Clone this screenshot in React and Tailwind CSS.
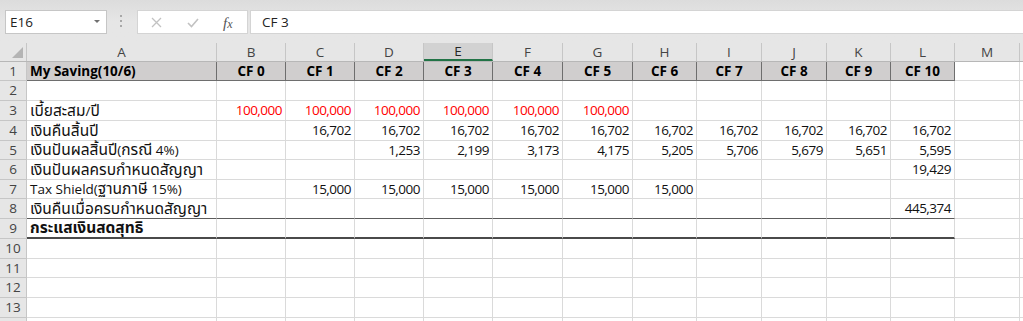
import React from 'react';

const colWidths = [190, 69, 69, 69, 69, 70, 70, 64, 65, 65, 64, 64, 65];
const letters = ['A', 'B', 'C', 'D', 'E', 'F', 'G', 'H', 'I', 'J', 'K', 'L', 'M'];
const rowHeights = [19, 20, 20, 20, 19, 20, 19, 20, 20, 20, 19, 20, 20, 20];

const cf = Array.from({ length: 11 }, (_, i) => `CF ${i}`);
const rep = (v, n) => Array(n).fill(v);

// cell values for columns B..L (index 0 = B)
const rows = [
  { label: 'My Saving(10/6)', values: cf, head: true },
  { label: '', values: [] },
  { label: 'เบี้ยสะสม/ปี', values: rep('100,000', 6), red: true },
  { label: 'เงินคืนสิ้นปี', values: ['', ...rep('16,702', 10)] },
  { label: 'เงินปันผลสิ้นปี(กรณี 4%)', values: ['', '', '1,253', '2,199', '3,173', '4,175', '5,205', '5,706', '5,679', '5,651', '5,595'] },
  { label: 'เงินปันผลครบกำหนดสัญญา', values: [...rep('', 10), '19,429'] },
  { label: 'Tax Shield(ฐานภาษี 15%)', values: ['', ...rep('15,000', 6)] },
  { label: 'เงินคืนเมื่อครบกำหนดสัญญา', values: [...rep('', 10), '445,374'], lineBelow: true },
  { label: 'กระแสเงินสดสุทธิ', values: [], bold: true, doubleBelow: true },
  { label: '', values: [] },
  { label: '', values: [] },
  { label: '', values: [] },
  { label: '', values: [] },
  { label: '', values: [], noNumber: true },
];

// thai runs render a bit larger, like Excel's fallback font
function Label({ text }) {
  return (
    <span className="leading-[19px]">
      {text.split(/([\u0E00-\u0E7F]+)/).map((part, i) =>
        /[\u0E00-\u0E7F]/.test(part) ? (
          <span key={i} className="text-[15.5px]">{part}</span>
        ) : (
          part
        )
      )}
    </span>
  );
}

function Toolbar() {
  return (
    <div className="h-[43px] bg-gradient-to-b from-[#dcdcdc] via-[#e6e6e6] to-[#e6e6e6] relative">
      {/* name box */}
      <div className="absolute left-[5px] top-[10px] w-[102px] h-[24px] bg-white border border-[#c6c6c6] flex items-center pl-[4px] text-[13.5px] text-[#222]">
        E16
        <svg className="absolute right-[6px] top-[9px]" width="6" height="4" viewBox="0 0 6 4">
          <path d="M0 0h6L3 3z" fill="#707070" />
        </svg>
      </div>
      {/* separator dots */}
      <div className="absolute left-[120px] top-[15px] flex flex-col gap-[3px]">
        <span className="w-[2px] h-[2px] bg-[#a8a8a8]" />
        <span className="w-[2px] h-[2px] bg-[#a8a8a8]" />
        <span className="w-[2px] h-[2px] bg-[#a8a8a8]" />
      </div>
      {/* cancel / enter / fx */}
      <div className="absolute left-[137px] top-[10px] w-[111px] h-[24px] bg-white border border-[#d4d4d4]">
        <svg className="absolute left-[13px] top-[6px]" width="11" height="11" viewBox="0 0 11 11">
          <path d="M1 1l9 9M10 1l-9 9" stroke="#c2c2c2" strokeWidth="1.3" />
        </svg>
        <svg className="absolute left-[49px] top-[7px]" width="12" height="10" viewBox="0 0 12 10">
          <path d="M1 5l3.5 3.5L11 1" stroke="#c2c2c2" strokeWidth="1.6" fill="none" />
        </svg>
        <span className="absolute left-[85px] top-[1px] font-['Liberation_Serif',serif] italic text-[15px] text-[#555]">
          f<span className="text-[12px]">x</span>
        </span>
      </div>
      {/* formula bar */}
      <div className="absolute left-[250px] top-[10px] right-0 h-[24px] bg-white border border-[#d4d4d4] border-r-0 flex items-center pl-[11px] text-[13.5px] text-[#222]">
        CF 3
      </div>
    </div>
  );
}

function ColumnHeader() {
  return (
    <div className="flex h-[19px] bg-[#e6e6e6] border-b border-[#b7b7b7]">
      <div className="w-[27px] shrink-0 border-r border-[#c6c6c6] relative">
        <svg className="absolute right-[3px] bottom-[3px]" width="11" height="11" viewBox="0 0 11 11">
          <path d="M11 0v11H0z" fill="#b4b4b4" />
        </svg>
      </div>
      {letters.map((l, i) => (
        <div
          key={l}
          style={{ width: colWidths[i] }}
          className={
            'shrink-0 border-r border-[#c6c6c6] flex items-center justify-center text-[13.5px] ' +
            (l === 'E' ? 'bg-[#d2d2d2] text-[#262626] border-b-2 border-b-[#217346]' : 'text-[#444]')
          }
        >
          {l}
        </div>
      ))}
      <div className="flex-1" />
    </div>
  );
}

function Row({ row, index }) {
  const h = rowHeights[index];
  return (
    <div className="flex" style={{ height: h }}>
      <div className="w-[27px] shrink-0 bg-[#e6e6e6] border-r border-b border-[#c6c6c6] flex items-center justify-center text-[13.5px] text-[#444]">
        {row.noNumber ? '' : index + 1}
      </div>
      {letters.map((l, i) => {
        const inTable = i <= 11;
        let cls = 'shrink-0 border-r border-b flex items-center text-[13.5px] whitespace-nowrap ';
        if (row.head && inTable) cls += 'bg-[#d0cece] border-[#6e6e6e] font-bold text-black ';
        else cls += 'border-[#dadada] ';
        if (row.lineBelow && inTable) cls += 'border-b-[#5c5c5c] ';
        if (row.doubleBelow && inTable) cls += 'border-b-2 border-b-[#4a4a4a] ';
        if (i === 0) {
          cls += 'pl-[3px] text-[#111] ';
          if (row.bold || row.head) cls += 'font-bold ';
          return (
            <div key={l} style={{ width: colWidths[i] }} className={cls}>
              <Label text={row.label} />
            </div>
          );
        }
        const v = row.values[i - 1] || '';
        if (row.head) cls += 'justify-center ';
        else cls += 'justify-end pr-[3px] tracking-[-0.5px] ' + (row.red ? 'text-[#ff0000] ' : 'text-[#111] ');
        return (
          <div key={l} style={{ width: colWidths[i] }} className={cls}>
            {v}
          </div>
        );
      })}
      <div className="flex-1 border-b border-[#dadada]" />
    </div>
  );
}

export default function App() {
  return (
    <div className="w-[1023px] h-[321px] overflow-hidden bg-white font-['Open_Sans','Noto_Sans','Noto_Sans_Thai',sans-serif]">
      <Toolbar />
      <ColumnHeader />
      {rows.map((r, i) => (
        <Row key={i} row={r} index={i} />
      ))}
    </div>
  );
}
